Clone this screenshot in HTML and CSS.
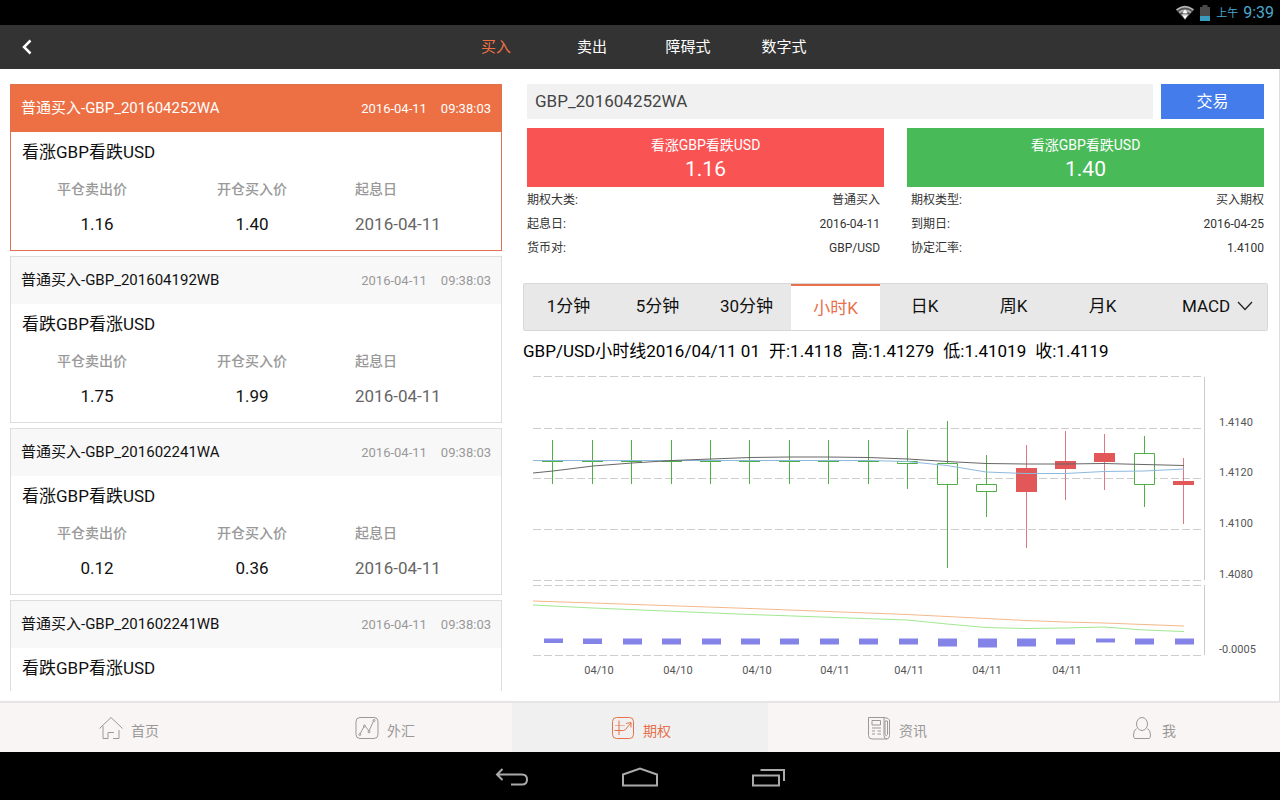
FILE: index.html
```html
<!DOCTYPE html>
<html lang="zh-CN">
<head>
<meta charset="utf-8">
<meta name="viewport" content="width=device-width, initial-scale=1">
<title>期权</title>
<link rel="stylesheet" href="styles.css">
</head>
<body>
<div class="status-bar">
  <svg class="wifi" width="20" height="16" viewBox="0 0 22 18" fill="none">
    <path d="M1 5.500Q11 -3 21 5.500L11 17Z" fill="#555"/>
    <path d="M1.500 5.500Q11 -2 20.500 5.500M4.500 8.500Q11 3.500 17.500 8.500M7.500 11.500Q11 9 14.500 11.500" stroke="#b5b5b5" stroke-width="2"/>
    <path d="M8 9L11 5L14 9ZM8 11.500L11 16L14 11.500Z" fill="#fff"/>
  </svg>
  <svg class="battery" width="10" height="16" viewBox="0 0 10 16">
    <path d="M2.500 0H7.500V2H10V16H0V2H2.500Z" fill="#4a4a4a"/>
    <path d="M0 11H10V16H0Z" fill="#3a9cc0"/>
  </svg>
  <span class="ampm">上午</span>
  <span class="clock">9:39</span>
</div>

<header class="top-bar">
  <button class="back" type="button" aria-label="返回">
    <svg width="10" height="16" viewBox="0 0 10 16" fill="none" stroke="#fff" stroke-width="2.500"><path d="M8.500 1.500L2 8L8.500 14.500"/></svg>
  </button>
  <nav class="top-tabs">
    <a class="top-tab active" href="#buy">买入</a>
    <a class="top-tab" href="#sell">卖出</a>
    <a class="top-tab" href="#barrier">障碍式</a>
    <a class="top-tab" href="#digital">数字式</a>
  </nav>
</header>

<main class="content">
  <section class="option-list">
    <article class="card selected">
      <header class="card-head"><h2 class="card-name">普通买入-GBP_201604252WA</h2><time class="card-time"><span>2016-04-11</span><span>09:38:03</span></time></header>
      <h3 class="card-title">看涨GBP看跌USD</h3>
      <dl class="quotes">
        <div class="quote close"><dt>平仓卖出价</dt><dd>1.16</dd></div>
        <div class="quote"><dt>开仓买入价</dt><dd>1.40</dd></div>
        <div class="quote date"><dt>起息日</dt><dd>2016-04-11</dd></div>
      </dl>
    </article>
    <article class="card">
      <header class="card-head"><h2 class="card-name">普通买入-GBP_201604192WB</h2><time class="card-time"><span>2016-04-11</span><span>09:38:03</span></time></header>
      <h3 class="card-title">看跌GBP看涨USD</h3>
      <dl class="quotes">
        <div class="quote close"><dt>平仓卖出价</dt><dd>1.75</dd></div>
        <div class="quote"><dt>开仓买入价</dt><dd>1.99</dd></div>
        <div class="quote date"><dt>起息日</dt><dd>2016-04-11</dd></div>
      </dl>
    </article>
    <article class="card">
      <header class="card-head"><h2 class="card-name">普通买入-GBP_201602241WA</h2><time class="card-time"><span>2016-04-11</span><span>09:38:03</span></time></header>
      <h3 class="card-title">看涨GBP看跌USD</h3>
      <dl class="quotes">
        <div class="quote close"><dt>平仓卖出价</dt><dd>0.12</dd></div>
        <div class="quote"><dt>开仓买入价</dt><dd>0.36</dd></div>
        <div class="quote date"><dt>起息日</dt><dd>2016-04-11</dd></div>
      </dl>
    </article>
    <article class="card">
      <header class="card-head"><h2 class="card-name">普通买入-GBP_201602241WB</h2><time class="card-time"><span>2016-04-11</span><span>09:38:03</span></time></header>
      <h3 class="card-title">看跌GBP看涨USD</h3>
    </article>
  </section>

  <section class="detail">
    <form class="trade">
      <input class="trade-code" type="text" value="GBP_201604252WA" aria-label="期权代码">
      <button class="trade-button" type="button">交易</button>
    </form>
    <div class="prices">
      <button class="price red" type="button"><span>看涨GBP看跌USD</span><strong>1.16</strong></button>
      <button class="price green" type="button"><span>看涨GBP看跌USD</span><strong>1.40</strong></button>
    </div>
    <dl class="facts">
      <div class="fact"><dt>期权大类:</dt><dd>普通买入</dd></div>
      <div class="fact"><dt>期权类型:</dt><dd>买入期权</dd></div>
      <div class="fact"><dt>起息日:</dt><dd>2016-04-11</dd></div>
      <div class="fact"><dt>到期日:</dt><dd>2016-04-25</dd></div>
      <div class="fact"><dt>货币对:</dt><dd>GBP/USD</dd></div>
      <div class="fact"><dt>协定汇率:</dt><dd>1.4100</dd></div>
    </dl>
    <div class="periods">
      <button class="period" type="button">1分钟</button>
      <button class="period" type="button">5分钟</button>
      <button class="period" type="button">30分钟</button>
      <button class="period active" type="button">小时K</button>
      <button class="period" type="button">日K</button>
      <button class="period" type="button">周K</button>
      <button class="period" type="button">月K</button>
      <label class="indicator">
        <select class="indicator-select" aria-label="指标"><option>MACD</option></select>
        <svg width="16" height="10" viewBox="0 0 16 10" fill="none" stroke="#222" stroke-width="1.300"><path d="M1 1L8 8.500L15 1"/></svg>
      </label>
    </div>
    <p class="summary"><span>GBP/USD小时线2016/04/11 01</span><span>开:1.4118</span><span>高:1.41279</span><span>低:1.41019</span><span>收:1.4119</span></p>
    <svg class="chart" viewBox="0 0 745 316" role="img" aria-label="GBP/USD小时线">
      <path class="grid" d="M10 6.500H681M10 58.500H681M10 108.500H681M10 159.500H681M10 210.500H681M10 215.500H681M10 285.500H681"/>
      <path class="axis" d="M681.500 7V210M681.500 215V285"/>
      <path class="wick up" d="M29.500 70V114M69.500 70V114M108.500 70V114M148.500 70V114M187.500 70V114M226.500 70V114M266.500 70V114M305.500 70V114M345.500 70V114M384.500 60V91M384.500 93V119M424.500 51V93M424.500 114V198M463.500 85V114M463.500 121V147M621.500 66V83M621.500 114V137"/>
      <path class="body up" d="M374.500 91.500h20v2h-20zM414.500 93.500h20v21h-20zM453.500 114.500h20v7h-20zM611.500 83.500h20v31h-20z"/>
      <path class="wick down" d="M503.500 75V178M542.500 61V130M581.500 64V120M660.500 88V154"/>
      <path class="body down" d="M493 98h21v24h-21zM532 91h21v8h-21zM571 83h21v9h-21zM650 111h21v4h-21z"/>
      <polyline class="line blue" points="10,90.500 345,90.500 384,91.500 424,95.500 463,102 503,103.500 542,103.500 581,101.500 621,101 661,99"/>
      <path class="doji" d="M19 91.500H40M59 91.500H80M98 91.500H119M138 91.500H159M177 91.500H198M216 91.500H237M256 91.500H277M295 91.500H316M335 91.500H356"/>
      <polyline class="line dark" points="10,103 30,101 70,96 109,93 149,90.500 188,89 227,87.500 266,87 305,87 345,87.500 385,89 424,91.500 463,93.500 503,94 542,94 581,93.500 621,94.500 661,95.500"/>
      <polyline class="line orange" points="10,231 70,233 227,238.500 384,244.500 424,246.500 463,248.500 503,250.500 542,252 581,253 621,254.500 661,256"/>
      <polyline class="line lime" points="10,235 70,238 227,244.500 384,250 424,254 463,257.500 503,258.500 542,258 581,257 621,260 661,261.500"/>
      <path class="bars" d="M21 268.500h19v4.500h-19zM60 268.500h19v5.500h-19zM100 268.500h19v6h-19zM139 268.500h19v6h-19zM179 268.500h19v6h-19zM218 268.500h19v6h-19zM257 268.500h19v6h-19zM297 268.500h19v6h-19zM336 268.500h19v6h-19zM376 268.500h19v6h-19zM415 268.500h19v8h-19zM455 268.500h19v9h-19zM494 268.500h19v8h-19zM533 268.500h19v6h-19zM573 268.500h19v4h-19zM612 268.500h19v6h-19zM652 268.500h19v6h-19z"/>
      <g class="tick">
        <text x="696" y="56">1.4140</text>
        <text x="696" y="106">1.4120</text>
        <text x="696" y="157">1.4100</text>
        <text x="696" y="208">1.4080</text>
        <text x="696" y="283">-0.0005</text>
      </g>
      <g class="tick middle">
        <text x="76" y="304">04/10</text>
        <text x="155" y="304">04/10</text>
        <text x="234" y="304">04/10</text>
        <text x="312" y="304">04/11</text>
        <text x="386" y="304">04/11</text>
        <text x="464" y="304">04/11</text>
        <text x="544" y="304">04/11</text>
      </g>
    </svg>
  </section>
</main>

<nav class="tab-bar">
  <a class="tab" href="#home">
    <svg class="tab-icon" width="24" height="24" viewBox="0 0 24 24"><path d="M.500 12.500L12 1.500L23.500 12.500M4 10V22.500H9V16.500H15M20 14V22.500H14"/></svg>
    <span>首页</span>
  </a>
  <a class="tab" href="#forex">
    <svg class="tab-icon" width="24" height="24" viewBox="0 0 24 24"><rect x="1" y="1.500" width="22" height="21" rx="4"/><path d="M5 18L9 10.500M10.500 10.500L14 15L18.500 5"/><circle cx="4.800" cy="18.500" r="1"/><circle cx="9.500" cy="10" r="1"/><circle cx="14" cy="15.800" r="1"/><circle cx="19" cy="4.500" r="1"/></svg>
    <span>外汇</span>
  </a>
  <a class="tab active" href="#options">
    <svg class="tab-icon" width="24" height="24" viewBox="0 0 24 24"><rect x="1.500" y="1.500" width="21" height="21" rx="4"/><path d="M8 4.500V19M3.500 14.500H12.500Q15 14 16.500 11L20 7M15 7.500L20 6.500V11.500"/><path d="M4 9.500H14" stroke-opacity=".5"/></svg>
    <span>期权</span>
  </a>
  <a class="tab" href="#news">
    <svg class="tab-icon" width="24" height="24" viewBox="0 0 24 24"><path d="M1.500 1.500H17V19.500Q17 23 20 23Q22.500 22.500 22.500 19.500V4Q22 2 17 1.500M1.500 1.500V19.500Q1.500 23 5 23H20M5 4.500H13.500V9H5ZM5 12H14M5 15H8M10.500 15H14M5 18H8M10.500 18H14M18 5V18.500Q19.500 21 20.500 18.500V5Z"/></svg>
    <span>资讯</span>
  </a>
  <a class="tab" href="#me">
    <svg class="tab-icon" width="24" height="24" viewBox="0 0 24 24"><ellipse cx="12" cy="8" rx="5.500" ry="6.500"/><path d="M6.500 12.500Q3.500 14.500 3.500 19Q3.500 22.500 5 22.500H19Q20.500 22.500 20.500 19Q20.500 14.500 17.500 12.500"/></svg>
    <span>我</span>
  </a>
</nav>

<nav class="system-bar">
  <button class="system-button" type="button" aria-label="后退"><svg width="34" height="20" viewBox="0 0 34 20"><path d="M7.500 2L2 7.500L7.500 13M2 7.500H27Q32 7.500 32 12.500Q32 17.500 27 17.500H16"/></svg></button>
  <button class="system-button" type="button" aria-label="主屏幕"><svg width="36" height="20" viewBox="0 0 36 20"><path d="M1 7.500L18 1.500L35 7.500V18.500H1Z"/></svg></button>
  <button class="system-button" type="button" aria-label="最近任务"><svg width="34" height="20" viewBox="0 0 34 20"><path d="M2 8.500H28V18.500H2ZM9.500 3H33V14"/></svg></button>
</nav>
</body>
</html>
```

FILE: styles.css
```css
* {
  box-sizing: border-box;
}

body {
  margin: 0;
  height: 100vh;
  display: flex;
  flex-direction: column;
  background: #fff;
  color: #111;
  font-family: Roboto, "Noto Sans CJK SC", sans-serif;
  font-size: 17px;
  line-height: 24px;
}

h2, h3, p, dl, dd {
  margin: 0;
  font-weight: 400;
}

button, input, select {
  font: inherit;
  color: inherit;
  border: 0;
  border-radius: 0;
  padding: 0;
  margin: 0;
  background: none;
}

a {
  color: inherit;
  text-decoration: none;
}

svg {
  display: block;
  flex: none;
}

.status-bar {
  flex: none;
  height: 25px;
  padding-right: 6px;
  display: flex;
  align-items: center;
  justify-content: flex-end;
  gap: 5px;
  background: #000;
  color: #4aa9cd;
}

.ampm {
  font-size: 11px;
  padding: 2px 0 0 1px;
}

.clock {
  font-size: 16px;
}

.top-bar {
  flex: none;
  height: 44px;
  display: grid;
  grid-template-columns: 1fr auto 1fr;
  align-items: center;
  background: #333;
  color: #fff;
}

.back {
  width: 54px;
  height: 44px;
  display: grid;
  place-items: center;
}

.top-tabs {
  display: flex;
}

.top-tab {
  width: 96px;
  text-align: center;
  font-size: 15px;
}

.top-tab.active {
  color: #ed7044;
}

.content {
  flex: 1;
  min-height: 0;
  display: grid;
  grid-template-columns: 492fr 745fr;
  gap: 21px;
  padding: 15px 11px 10px 10px;
  border-right: 1px solid #ddd;
}

.option-list {
  min-height: 0;
  overflow: hidden;
  display: flex;
  flex-direction: column;
  gap: 5px;
}

.card {
  flex: none;
  height: 167px;
  border: 1px solid #ddd;
}

.card-head {
  height: 47px;
  padding: 0 10px;
  display: flex;
  align-items: center;
  justify-content: space-between;
  background: #f8f8f8;
}

.card-name {
  padding-bottom: 2px;
  font-size: 15px;
}

.card-time {
  display: flex;
  gap: 14px;
  font-size: 13px;
  color: #999;
}

.card-title {
  padding: 8px 11px 0;
  font-size: 17px;
}

.quotes {
  display: grid;
  grid-template-columns: 150fr 160fr 169fr;
  padding: 13px 0 0 11px;
}

.quote {
  display: grid;
  gap: 11px;
  text-align: center;
}

.quote dt {
  font-size: 14px;
  font-weight: 500;
  color: #999;
}

.quote.close dt {
  padding-right: 10px;
}

.quote.date {
  padding-left: 23px;
  text-align: left;
}

.quote.date dd {
  color: #666;
}

.card.selected {
  border-color: #e0704e;
}

.card.selected .card-head {
  background: #ed7044;
}

.card.selected .card-head,
.card.selected .card-time {
  color: #fff;
}

.trade {
  display: flex;
  gap: 8px;
  padding: 0 4px;
}

.trade-code {
  flex: 1;
  min-width: 0;
  height: 35px;
  padding: 0 8px 2px;
  background: #f1f1f1;
  color: #444;
}

.trade-button {
  width: 103px;
  background: #447ceb;
  color: #fff;
  font-size: 16px;
}

.prices {
  display: grid;
  grid-template-columns: 1fr 1fr;
  gap: 23px;
  padding: 9px 4px 0;
}

.price {
  height: 59px;
  padding-bottom: 2px;
  display: flex;
  flex-direction: column;
  align-items: center;
  justify-content: center;
  color: #fff;
  font-size: 14px;
}

.price strong {
  font-size: 21px;
  font-weight: 400;
}

.price.red {
  background: #f95353;
}

.price.green {
  background: #49ba58;
}

.facts {
  display: grid;
  grid-template-columns: 1fr 1fr;
  column-gap: 31px;
  padding: 1px 4px 0;
  font-size: 12px;
  color: #333;
}

.fact {
  display: flex;
  justify-content: space-between;
}

.periods {
  margin-top: 23px;
  height: 48px;
  display: grid;
  grid-template-columns: repeat(7, 89fr) 120fr;
  border: 1px solid #d8d8d8;
  border-radius: 2px;
  background: #e8e8e8;
}

.period,
.indicator {
  padding-bottom: 2px;
}

.period.active {
  padding-bottom: 0;
  background: #fff;
  border-top: 2px solid #e8704a;
  color: #e8704a;
}

.indicator {
  display: flex;
  align-items: center;
  justify-content: flex-end;
  gap: 6px;
  padding-right: 14px;
}

.indicator-select {
  appearance: none;
}

.summary {
  display: flex;
  gap: 9px;
  padding-top: 8px;
  white-space: nowrap;
  color: #000;
}

.chart {
  width: 100%;
  height: auto;
  margin-top: 7px;
}

.grid,
.axis,
.wick,
.doji,
.line {
  fill: none;
  stroke-width: 1;
}

.grid {
  stroke: #cdcdcd;
  stroke-dasharray: 8 3;
}

.axis {
  stroke: #c8ccd0;
}

.wick.up,
.doji {
  stroke: #4fae46;
}

.wick.down {
  stroke: #dc7a80;
}

.body.up {
  fill: #fff;
  stroke: #4fae46;
}

.body.down {
  fill: #e25757;
}

.line.blue {
  stroke: #8db9dd;
}

.line.dark {
  stroke: #666;
}

.line.orange {
  stroke: #f4b88c;
}

.line.lime {
  stroke: #a2e892;
}

.bars {
  fill: #8484e8;
}

.tick {
  font-size: 11px;
  fill: #555;
}

.tick.middle {
  text-anchor: middle;
}

.tab-bar {
  flex: none;
  height: 51px;
  display: grid;
  grid-template-columns: repeat(5, 1fr);
  border-top: 2px solid #e6e4e4;
  background: #f9f5f4;
  color: #999;
  font-size: 14px;
}

.tab {
  padding-left: 2px;
  display: flex;
  align-items: center;
  justify-content: center;
  gap: 8px;
}

.tab span {
  padding-top: 6px;
}

.tab.active {
  background: #f0f0f0;
  color: #e5704c;
}

.tab-icon {
  fill: none;
  stroke: currentColor;
  stroke-width: 1;
}

.system-bar {
  flex: none;
  height: 48px;
  padding-top: 2px;
  display: flex;
  justify-content: center;
  background: #000;
}

.system-button {
  width: 128px;
  display: grid;
  place-items: center;
  fill: none;
  stroke: #aaa;
  stroke-width: 2;
}
```
